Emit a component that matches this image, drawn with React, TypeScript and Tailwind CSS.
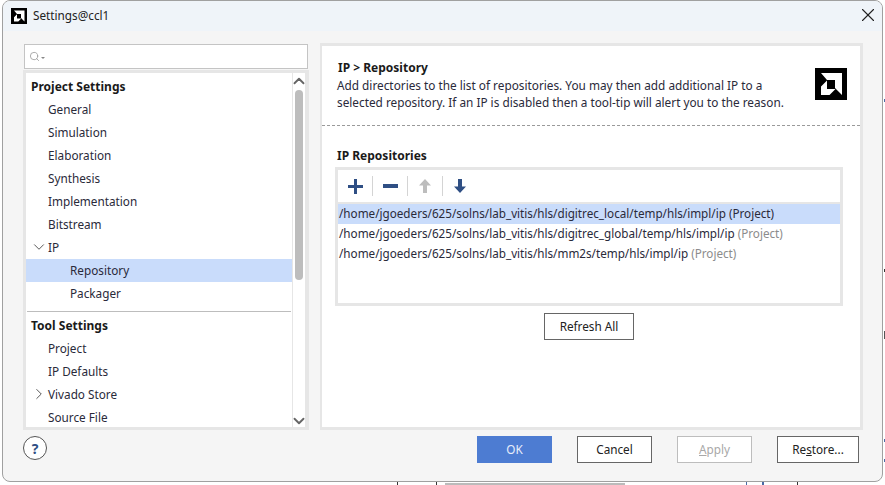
import type { ReactNode } from 'react';
import { ChevronDown, ChevronRight, ChevronUp, Search, X } from 'lucide-react';

function AmdLogo({ size }: { size: number }) {
  return (
    <svg width={size} height={size} viewBox="0 0 32 32" className="shrink-0">
      <rect width="32" height="32" fill="#000" />
      <path d="M6 5H27V27L20 20V12H12z" fill="#fff" />
      <path d="M12 12.5L6 18.5V27H14.5L20.5 21H12z" fill="#fff" />
    </svg>
  );
}

function TreeRow({ label, indent = 'pl-[22px]', bold, selected, arrow }: { label: string; indent?: string; bold?: boolean; selected?: boolean; arrow?: 'open' | 'closed' }) {
  return (
    <div className={`relative h-[23px] shrink-0 flex items-center ${indent} ${bold ? 'font-bold text-[12px] text-[#1a1a1a]' : 'text-[#2a2a3a]'} ${selected ? 'bg-[#c9dcfb]' : ''}`}>
      {arrow === 'open' && <ChevronDown className="absolute left-[4px] top-[2px] h-[18px] w-[18px] text-[#555]" strokeWidth={1.3} />}
      {arrow === 'closed' && <ChevronRight className="absolute left-[4px] top-[2px] h-[18px] w-[18px] text-[#555]" strokeWidth={1.3} />}
      {label}
    </div>
  );
}

function ToolSep() {
  return <div className="h-[20px] w-px bg-[#d4d4d4]" />;
}

function Btn({ label, className = '' }: { label: ReactNode; className?: string }) {
  return <button className={`h-[27px] border border-[#666] bg-white text-[#222] flex items-center justify-center ${className}`}>{label}</button>;
}

const repos = [
  { path: '/home/jgoeders/625/solns/lab_vitis/hls/digitrec_local/temp/hls/impl/ip', selected: true },
  { path: '/home/jgoeders/625/solns/lab_vitis/hls/digitrec_global/temp/hls/impl/ip' },
  { path: '/home/jgoeders/625/solns/lab_vitis/hls/mm2s/temp/hls/impl/ip' },
];

export default function App() {
  return (
    <div className="relative w-[885px] h-[485px] bg-white overflow-hidden pl-[2px] pr-[2px] pb-[3px] font-['Noto_Sans',sans-serif] text-[11.75px]">
      {/* bits of the window behind the dialog */}
      <div className="absolute left-[884px] top-[99px] h-[3px] w-px bg-[#4a6aa5]" />
      <div className="absolute left-[884px] top-[269px] h-[3px] w-px bg-[#333]" />
      <div className="absolute left-[884px] top-[331px] h-[8px] w-px bg-[#555]" />
      <div className="absolute left-[884px] top-[439px] h-[3px] w-px bg-[#4a6aa5]" />
      <div className="absolute left-[884px] top-[459px] h-[3px] w-px bg-[#4a6aa5]" />
      <div className="absolute left-[397px] top-[482px] h-[3px] w-px bg-[#333]" />
      <div className="absolute left-[436px] top-[482px] h-[3px] w-px bg-[#333]" />
      <div className="absolute left-[445px] top-[483px] h-[2px] w-[180px] bg-[#bbb]" />
      <div className="absolute left-[746px] top-[482px] h-[3px] w-px bg-[#4a6aa5]" />
      <div className="absolute left-[762px] top-[482px] h-[3px] w-[2px] bg-[#4a6aa5]" />
      <div className="absolute left-[797px] top-[482px] h-[3px] w-px bg-[#333]" />

      <div className="relative w-full h-full flex flex-col border border-[#a0a0a0] rounded-[8px] overflow-hidden bg-[#f5f5f5]">
        {/* title bar */}
        <div className="h-[30px] shrink-0 bg-[#eff4f9] flex items-center pl-[8px] pr-[3px]">
          <AmdLogo size={16} />
          <span className="ml-[6px] text-[#222]">Settings@ccl1</span>
          <X className="ml-auto mb-[2px] h-[22px] w-[22px] text-[#222]" strokeWidth={1.2} />
        </div>

        {/* body */}
        <div className="flex-1 flex pl-[20px] pr-[19px] pt-[12px] gap-[11px] min-h-0">
          {/* left column */}
          <div className="w-[286px] shrink-0 flex flex-col mt-px">
            <div className="mx-px h-[25px] shrink-0 bg-white border border-[#c4c4c4] flex items-center pl-[4px] text-[#999]">
              <Search className="h-[11px] w-[11px]" strokeWidth={1.75} />
              <span className="ml-px mt-[2px] w-0 h-0 border-x-[2px] border-t-[2px] border-x-transparent border-t-[#888]" />
            </div>
            <div className="mt-px h-[360px] shrink-0 flex bg-white border-x-[3px] border-y-[3px] border-[#e6e6e6] border-r-[4px] overflow-hidden">
              <div className="flex-1 flex flex-col overflow-hidden pt-[2px] min-w-0 border-r border-[#e6e6e6]">
                <TreeRow label="Project Settings" indent="pl-[5px]" bold />
                <TreeRow label="General" />
                <TreeRow label="Simulation" />
                <TreeRow label="Elaboration" />
                <TreeRow label="Synthesis" />
                <TreeRow label="Implementation" />
                <TreeRow label="Bitstream" />
                <TreeRow label="IP" arrow="open" />
                <TreeRow label="Repository" indent="pl-[44px]" selected />
                <TreeRow label="Packager" indent="pl-[44px]" />
                <div className="h-px shrink-0 bg-[#bdbdbd] mx-px mt-[6px] mb-[2px]" />
                <TreeRow label="Tool Settings" indent="pl-[5px]" bold />
                <TreeRow label="Project" />
                <TreeRow label="IP Defaults" />
                <TreeRow label="Vivado Store" arrow="closed" />
                <TreeRow label="Source File" />
              </div>
              {/* scrollbar */}
              <div className="w-[12px] shrink-0 flex flex-col items-center">
                <ChevronUp className="h-[18px] w-[18px] mt-[-1px] text-[#666] shrink-0" strokeWidth={2.5} />
                <div className="w-[8px] h-[190px] rounded-[4px] bg-[#bdbdbd]" />
                <ChevronDown className="h-[18px] w-[18px] mt-auto mb-[-3px] text-[#666] shrink-0" strokeWidth={2.5} />
              </div>
            </div>
          </div>

          {/* right panel */}
          <div className="w-[543px] h-[387px] shrink-0 bg-white border-[3px] border-l-[2px] border-[#e6e6e6] flex flex-col">
            <div className="h-[80px] shrink-0 border-b border-dashed border-[#9a9a9a] flex pl-[15px] pr-[13px] pt-[13px]">
              <div className="flex-1 leading-[17px] text-[11.8px] text-[#2a2a3a]">
                <div className="h-[18px] pl-px font-bold text-[12px] text-[#1a1a1a]">IP &gt; Repository</div>
                <div>Add directories to the list of repositories. You may then add additional IP to a</div>
                <div>selected repository. If an IP is disabled then a tool-tip will alert you to the reason.</div>
              </div>
              <div className="pt-[9px]">
                <AmdLogo size={32} />
              </div>
            </div>
            <div className="flex-1 flex flex-col pl-[13px] pr-[17px] pt-[21px] min-h-0">
              <div className="h-[18px] pl-[2px] font-bold text-[12px] text-[#1a1a1a] leading-[17px]">IP Repositories</div>
              <div className="mt-[2px] h-[139px] border-[3px] border-[#e6e6e6] flex flex-col bg-white">
                <div className="h-[34px] shrink-0 border-b-[2px] border-[#e6e6e6] flex items-center">
                  <div className="w-[34px] flex justify-center">
                    <svg width="15" height="15" viewBox="0 0 15 15"><path d="M6 0h3v6h6v3H9v6H6V9H0V6h6z" fill="#2f4f84" /></svg>
                  </div>
                  <ToolSep />
                  <div className="w-[34px] flex justify-center">
                    <svg width="15" height="4" viewBox="0 0 15 4"><rect width="15" height="4" fill="#2f4f84" /></svg>
                  </div>
                  <ToolSep />
                  <div className="w-[34px] flex justify-center">
                    <svg width="12" height="14" viewBox="0 0 12 14"><path d="M6 0l6 6.5H8V14H4V6.5H0z" fill="#bdbdbd" /></svg>
                  </div>
                  <ToolSep />
                  <div className="w-[34px] flex justify-center">
                    <svg width="12" height="14" viewBox="0 0 12 14"><path d="M6 14L0 7.5h4V0h4v7.5h4z" fill="#2f4f84" /></svg>
                  </div>
                </div>
                <div className="flex-1">
                  {repos.map((r) => (
                    <div key={r.path} className={`h-[20px] flex items-center pl-px whitespace-pre text-[11.7px] text-[#2a2a3a] ${r.selected ? 'bg-[#c9dcfb]' : ''}`}>
                      {r.path} <span className={r.selected ? 'text-[#2a2a3a]' : 'text-[#8c8c8c]'}>(Project)</span>
                    </div>
                  ))}
                </div>
              </div>
              <div className="mt-[7px] flex justify-center">
                <Btn label="Refresh All" className="w-[90px]" />
              </div>
            </div>
          </div>
        </div>

        {/* footer */}
        <div className="h-[52px] shrink-0 flex items-start pt-[7px] pl-[20px]">
          <div className="w-[24px] h-[24px] rounded-full border border-[#555] bg-white flex items-center justify-center font-bold text-[14px] text-[#2f4f84]">?</div>
          <div className="ml-[430px] flex gap-[25px]">
            <button className="w-[75px] h-[27px] bg-[#4d7cd2] text-[#e8eefa]">OK</button>
            <Btn label="Cancel" className="w-[75px]" />
            <button className="w-[75px] h-[27px] border border-[#bdbdbd] bg-white text-[#a8a8a8]"><span className="underline">A</span>pply</button>
            <Btn label={<>Re<span className="underline">s</span>tore...</>} className="w-[82px]" />
          </div>
        </div>
      </div>
    </div>
  );
}
